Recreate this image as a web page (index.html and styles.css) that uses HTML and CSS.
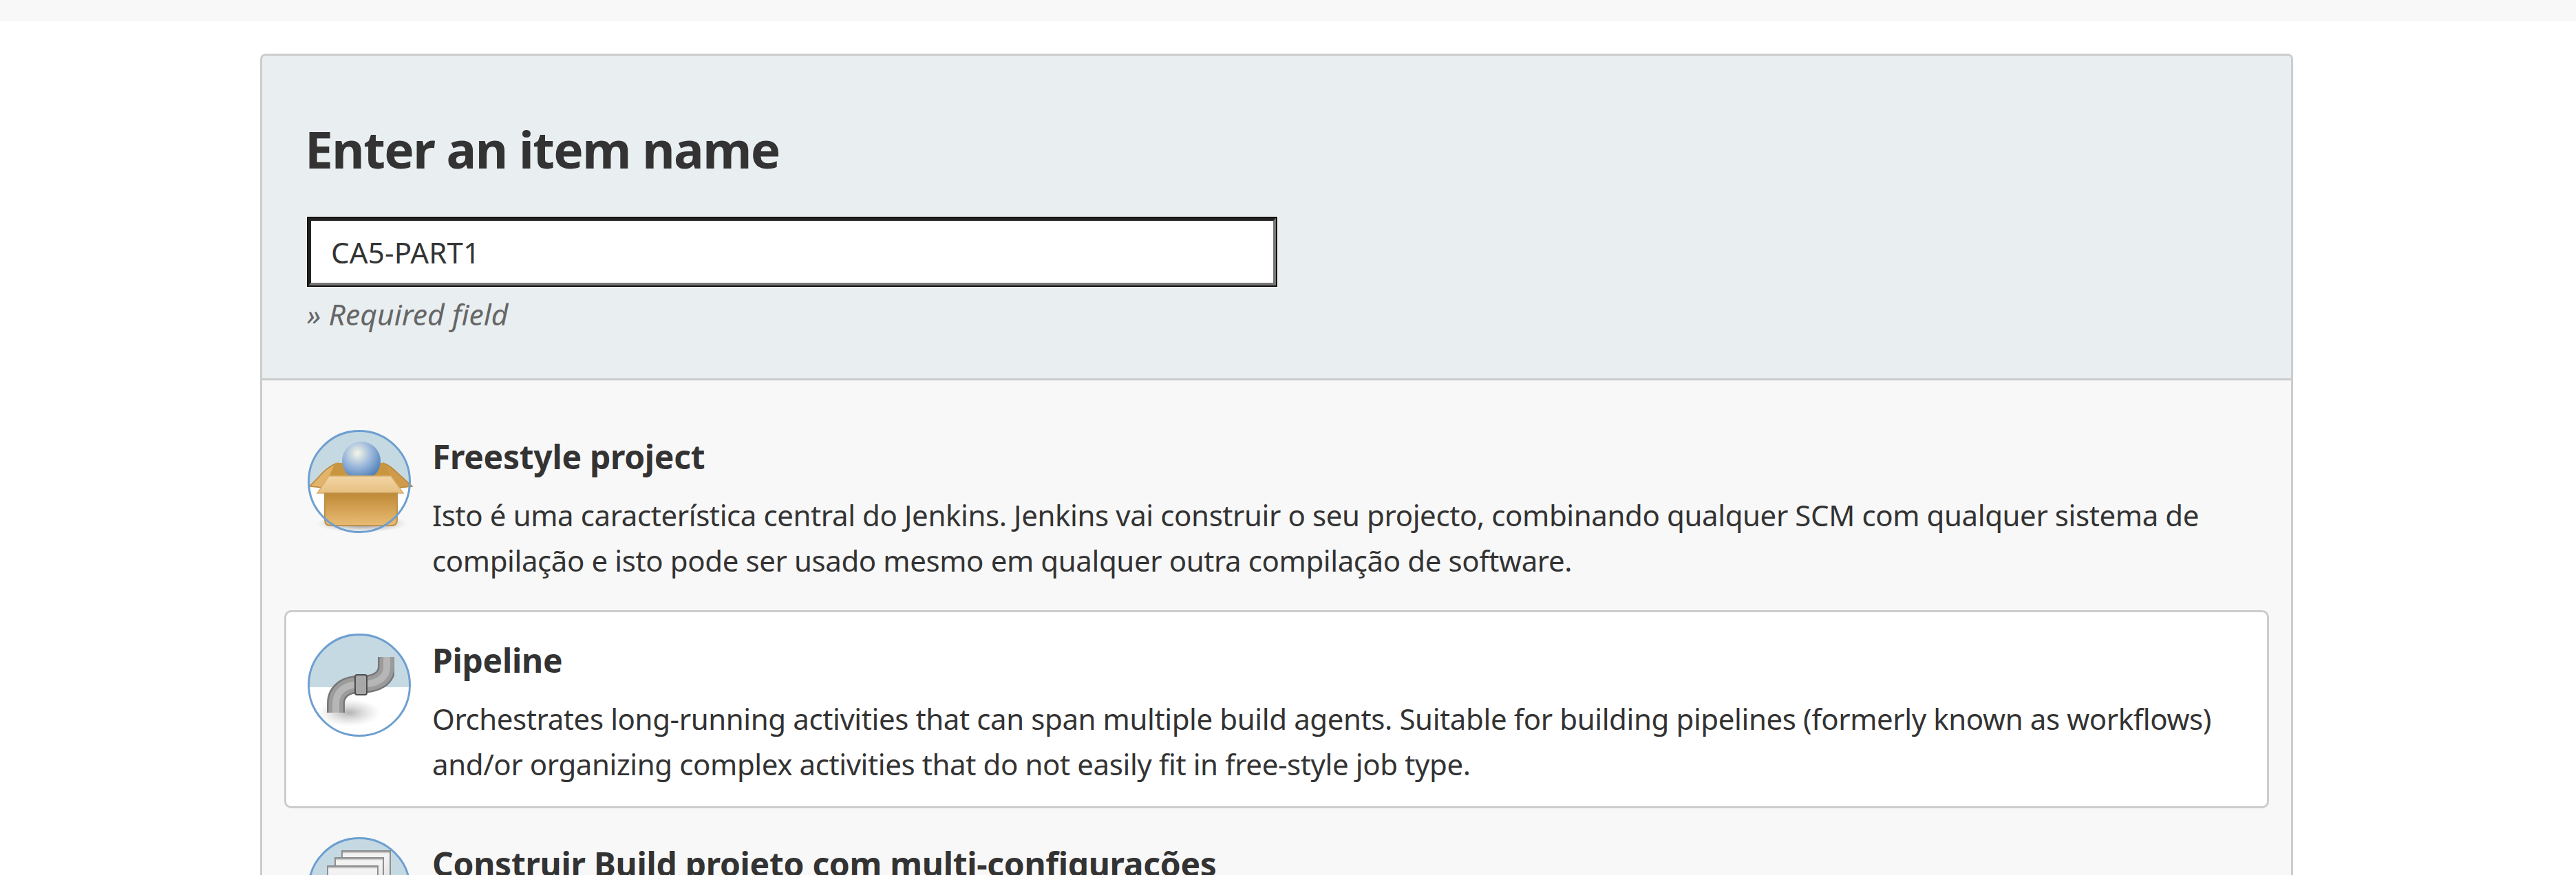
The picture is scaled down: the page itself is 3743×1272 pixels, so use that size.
FILE: index.html
```html
<!DOCTYPE html>
<html lang="pt">
<head>
<meta charset="utf-8">
<title>New Item</title>
<link rel="stylesheet" href="styles.css">
</head>
<body>
<div class="topbar"></div>
<main class="panel">
  <section class="name-section">
    <h1 class="name-title">Enter an item name</h1>
    <div class="name-input">CA5-PART1</div>
    <p class="required">» Required field</p>
  </section>
  <ul class="items">
    <li class="item">
      <svg class="icon" viewBox="0 0 150 150">
        <defs>
          <clipPath id="c1"><circle cx="75" cy="75" r="73.5"/></clipPath>
          <radialGradient id="ball" cx="0.4" cy="0.3" r="0.7"><stop offset="0" stop-color="#f6f6e6"/><stop offset="0.5" stop-color="#9db9dc"/><stop offset="1" stop-color="#4f7fb8"/></radialGradient>
          <linearGradient id="box" x1="0" y1="0" x2="0" y2="1"><stop offset="0" stop-color="#bf8a36"/><stop offset="1" stop-color="#e9bb74"/></linearGradient>
          <linearGradient id="lid" x1="0" y1="0" x2="0" y2="1"><stop offset="0" stop-color="#f2d5a4"/><stop offset="1" stop-color="#e7bf80"/></linearGradient>
          <radialGradient id="sh1"><stop offset="0" stop-color="#666" stop-opacity=".9"/><stop offset="1" stop-color="#999" stop-opacity="0"/></radialGradient>
          <filter id="soft" x="-10%" y="-10%" width="120%" height="120%"><feGaussianBlur stdDeviation="0.7"/></filter>
        </defs>
        <circle cx="75" cy="75" r="73.5" fill="#fff"/>
        <path d="M0 0H150V82H0Z" fill="#c5d9e3" clip-path="url(#c1)"/>
        <g filter="url(#soft)">
          <ellipse cx="79" cy="136" rx="66" ry="13" fill="url(#sh1)"/>
          <path d="M3 82 L22 62 Q32 52 44 48 L60 66 L22 84Z" fill="#e2b36a" stroke="#b98632" stroke-width="1.5"/>
          <path d="M152 82 L130 62 Q120 52 110 48 L96 66 L134 84Z" fill="#cf9a4c" stroke="#b98632" stroke-width="1.5"/>
          <path d="M40 48H112L122 70H30Z" fill="#c9963f"/>
          <circle cx="78" cy="45" r="28" fill="url(#ball)"/>
          <path d="M31 67H121L139 92H14Z" fill="url(#lid)" stroke="#d8ae6c" stroke-width="1.5"/>
          <path d="M25 92H130V131Q130 139 122 139H33Q25 139 25 131Z" fill="url(#box)" stroke="#bd9048" stroke-width="2"/>
        </g>
        <circle cx="75" cy="75" r="73.5" fill="none" stroke="#6d9fd0" stroke-width="3"/>
      </svg>
      <div class="item-text">
        <h2 class="item-title">Freestyle project</h2>
        <p class="item-desc">Isto é uma característica central do Jenkins. Jenkins vai construir o seu projecto, combinando qualquer SCM com qualquer sistema de compilação e isto pode ser usado mesmo em qualquer outra compilação de software.</p>
      </div>
    </li>
    <li class="item item-selected">
      <svg class="icon" viewBox="0 0 150 150">
        <defs>
          <clipPath id="c2"><circle cx="75" cy="75" r="73.5"/></clipPath>
          <radialGradient id="sh2"><stop offset="0" stop-color="#aaa" stop-opacity=".9"/><stop offset="1" stop-color="#ccc" stop-opacity="0"/></radialGradient>
          <filter id="soft2" x="-10%" y="-10%" width="120%" height="120%"><feGaussianBlur stdDeviation="0.7"/></filter>
        </defs>
        <circle cx="75" cy="75" r="73.5" fill="#fff"/>
        <path d="M0 0H150V78H0Z" fill="#c5d9e3" clip-path="url(#c2)"/>
        <g filter="url(#soft2)">
          <ellipse cx="60" cy="115" rx="46" ry="20" fill="url(#sh2)"/>
          <path d="M41 115 V102 C41 84 55 74 75 74 C101 74 115 65 115 48 V34" fill="none" stroke="#777" stroke-width="26"/>
          <path d="M41 115 V102 C41 84 55 74 75 74 C101 74 115 65 115 48 V34" fill="none" stroke="#9b9b9b" stroke-width="21"/>
          <path d="M41 115 V102 C41 84 55 74 75 74 C101 74 115 65 115 48 V34" fill="none" stroke="#b6b6b6" stroke-width="10"/>
          <rect x="69" y="60" width="17" height="29" rx="3" fill="#a8a8a8" stroke="#4d4d4d" stroke-width="2"/>
        </g>
        <circle cx="75" cy="75" r="73.5" fill="none" stroke="#6d9fd0" stroke-width="3"/>
      </svg>
      <div class="item-text">
        <h2 class="item-title">Pipeline</h2>
        <p class="item-desc">Orchestrates long-running activities that can span multiple build agents. Suitable for building pipelines (formerly known as workflows) and/or organizing complex activities that do not easily fit in free-style job type.</p>
      </div>
    </li>
    <li class="item">
      <svg class="icon" viewBox="0 0 150 150">
        <defs>
          <clipPath id="c3"><circle cx="75" cy="75" r="73.5"/></clipPath>
          <linearGradient id="page" x1="0" y1="0" x2="0" y2="1"><stop offset="0" stop-color="#8a8a8a"/><stop offset="0.06" stop-color="#f4f4f4"/><stop offset="1" stop-color="#d8d8d8"/></linearGradient>
          <filter id="soft3" x="-10%" y="-10%" width="120%" height="120%"><feGaussianBlur stdDeviation="0.6"/></filter>
        </defs>
        <circle cx="75" cy="75" r="73.5" fill="#fff"/>
        <path d="M0 0H150V78H0Z" fill="#c5d9e3" clip-path="url(#c3)"/>
        <g filter="url(#soft3)">
          <rect x="50" y="20" width="70" height="66" fill="url(#page)" stroke="#8f8f8f" stroke-width="2"/>
          <rect x="40" y="30" width="70" height="66" fill="url(#page)" stroke="#8f8f8f" stroke-width="2"/>
          <rect x="29" y="42" width="73" height="66" fill="url(#page)" stroke="#8f8f8f" stroke-width="2"/>
        </g>
        <circle cx="75" cy="75" r="73.5" fill="none" stroke="#6d9fd0" stroke-width="3"/>
      </svg>
      <div class="item-text">
        <h2 class="item-title">Construir Build projeto com multi-configurações</h2>
      </div>
    </li>
  </ul>
</main>
</body>
</html>
```
FILE: styles.css
```css
* { box-sizing: border-box; }
html, body { margin: 0; height: 1272px; overflow: hidden; background: #fff; }
body { font-family: "Noto Sans", "Open Sans", sans-serif; color: #333; }
.topbar { height: 31px; background: #f8f8f8; }
.panel { width: 2954px; margin: 47px 0 0 378px; border: 3px solid #ccc; border-radius: 8px; background: #f8f8f8; }
.name-section { height: 472px; padding: 0 65px; background: #e9eef1; border-bottom: 3px solid #ccc; border-radius: 5px 5px 0 0; }
.name-title { margin: 0 0 0 -3px; padding-top: 85px; font-size: 73px; line-height: 102px; letter-spacing: -1.6px; font-weight: 700; color: #333; }
.name-input { width: 1406px; height: 98px; margin: 49px 0 0 2px; padding: 0 29px; border: 4px solid #222; border-right-color: #767676; border-bottom-color: #767676; outline: 2px solid #101010; box-shadow: 0 0 0 3px #fff; background: #fff; font-size: 42px; line-height: 92px; letter-spacing: 0.2px; color: #333; }
.required { margin: 13px 0 0; font-size: 42.7px; line-height: 57px; font-style: italic; color: #666; }
.items { list-style: none; margin: 0; padding: 38px 32px 0; display: flex; flex-direction: column; gap: 8px; }
.item { height: 288px; padding: 31px; display: flex; gap: 31px; border: 3px solid transparent; border-radius: 10px; }
.item-selected { background: #fff; border-color: #ccc; }
.icon { width: 150px; height: 150px; flex: none; overflow: visible; }
.item-text { padding-top: 6px; }
.item-title { margin: 0; font-size: 48px; line-height: 66px; letter-spacing: -0.3px; font-weight: 700; color: #333; }
.item-desc { margin: 19px 0 0; font-size: 42px; line-height: 66px; letter-spacing: -0.4px; color: #333; }
```
